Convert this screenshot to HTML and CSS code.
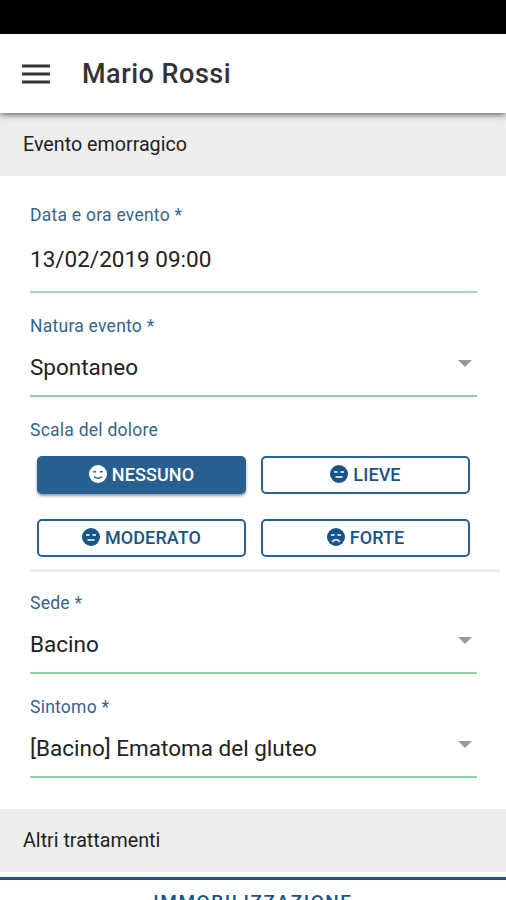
FILE: index.html
```html
<!DOCTYPE html>
<html lang="it">
<head>
    <meta charset="UTF-8">
    <meta name="viewport" content="width=device-width, initial-scale=1.0">
    <title>Mario Rossi</title>
    <link rel="stylesheet" href="styles.css">
</head>
<body>
    <div class="status-bar"></div>

    <header class="toolbar">
        <svg class="menu-icon" viewBox="0 0 28 20">
            <path d="M0 2h28M0 10h28M0 18h28" stroke="#333" stroke-width="2.8"/>
        </svg>
        <h1>Mario Rossi</h1>
    </header>

    <h2 class="section-title">Evento emorragico</h2>

    <main class="form">
        <div class="field field-date">
            <label>Data e ora evento *</label>
            <div class="value"><span>13/02/2019 09:00</span></div>
        </div>

        <div class="field">
            <label>Natura evento *</label>
            <div class="value"><span>Spontaneo</span><i class="arrow"></i></div>
        </div>

        <div class="pain">
            <label>Scala del dolore</label>
            <div class="buttons">
                <button class="active">
                    <svg class="face" viewBox="0 0 18 18">
                        <circle cx="9" cy="9" r="9" fill="currentColor"/>
                        <path class="line" d="M4.5 7.2q1.2-1.2 2.4 0M11.1 7.2q1.2-1.2 2.4 0M5 11.4q4 3.6 8 0"/>
                    </svg>
                    <span>NESSUNO</span>
                </button>
                <button>
                    <svg class="face" viewBox="0 0 18 18">
                        <circle cx="9" cy="9" r="9" fill="currentColor"/>
                        <path class="line" d="M4 7h3.6M10.4 7H14M5.5 12h7"/>
                    </svg>
                    <span>LIEVE</span>
                </button>
                <button>
                    <svg class="face" viewBox="0 0 18 18">
                        <circle cx="9" cy="9" r="9" fill="currentColor"/>
                        <path class="line" d="M4 7h3.6M10.4 7H14M5.5 12h7"/>
                    </svg>
                    <span>MODERATO</span>
                </button>
                <button>
                    <svg class="face" viewBox="0 0 18 18">
                        <circle cx="9" cy="9" r="9" fill="currentColor"/>
                        <path class="line" d="M4 7h3.6M10.4 7H14M5 13.8q4-4.2 8 0"/>
                    </svg>
                    <span>FORTE</span>
                </button>
            </div>
        </div>

        <div class="field">
            <label>Sede *</label>
            <div class="value"><span>Bacino</span><i class="arrow"></i></div>
        </div>

        <div class="field">
            <label>Sintomo *</label>
            <div class="value"><span>[Bacino] Ematoma del gluteo</span><i class="arrow"></i></div>
        </div>
    </main>

    <h2 class="section-title">Altri trattamenti</h2>

    <button class="treatment">IMMOBILIZZAZIONE</button>
</body>
</html>
```
FILE: styles.css
```css
* {
    box-sizing: border-box;
}

body {
    margin: 0;
    height: 900px;
    overflow: hidden;
    background-color: #fff;
    font-family: Roboto, sans-serif;
    color: #222;
}

.status-bar {
    height: 34px;
    background-color: #000;
}

.toolbar {
    position: relative;
    display: flex;
    align-items: center;
    height: 79px;
    padding-left: 22px;
    background-color: #fff;
    box-shadow: 0 1px 7px rgba(0, 0, 0, 0.7);
}

.menu-icon {
    width: 28px;
    height: 20px;
    margin-right: 32px;
}

h1 {
    margin: 0;
    font-size: 27px;
    font-weight: 500;
    letter-spacing: 0.5px;
    color: #333;
}

.section-title {
    height: 63px;
    margin: 0;
    padding-left: 23px;
    background-color: #eee;
    font-size: 19.7px;
    font-weight: 400;
    line-height: 64px;
}

.form {
    padding: 26px 29px 31px 30px;
}

label {
    display: block;
    height: 24px;
    font-size: 17.5px;
    line-height: 26px;
    letter-spacing: 0.25px;
    color: #36638f;
}

.field {
    height: 104px;
    padding-top: 20px;
    border-bottom: 2px solid #8fd0a3;
}

.field-date {
    height: 91px;
    padding-top: 0;
    border-bottom-color: #a5dab5;
}

.value {
    display: flex;
    align-items: center;
    justify-content: space-between;
    height: 58px;
    padding-top: 2px;
    font-size: 22.5px;
}

.field-date .value {
    height: 65px;
    padding-top: 0;
}

.arrow {
    margin: 0 5px 8px 0;
    border: 7px solid transparent;
    border-top-color: #999;
    border-bottom: 0;
}

.pain {
    height: 175px;
    margin-right: -23px;
    padding-top: 20px;
    border-bottom: 3px solid #eee;
}

.pain + .field {
    height: 102px;
    padding-top: 18px;
}

.buttons {
    display: grid;
    grid-template-columns: 209px 209px;
    gap: 25px 15px;
    padding: 15px 0 0 7px;
}

.buttons button {
    display: flex;
    align-items: center;
    justify-content: center;
    gap: 5px;
    height: 38px;
    padding: 0 0 2px;
    border: 2px solid #2c6191;
    border-radius: 5px;
    background-color: #fff;
    color: #195488;
    font-family: inherit;
    font-size: 18px;
    font-weight: 500;
    letter-spacing: 0.1px;
}

.buttons .active {
    border-color: #275f8f;
    background-color: #275f8f;
    color: #fff;
    box-shadow: 0 2px 3px rgba(0, 0, 0, 0.4);
}

.face {
    width: 18px;
    height: 18px;
}

.line {
    fill: none;
    stroke: #c5d6e5;
    stroke-width: 2;
}

.active .line {
    stroke: #275f8f;
    stroke-width: 1.4;
}

.treatment {
    display: block;
    width: 100%;
    height: 46px;
    margin-top: 5px;
    padding: 0;
    border: 0;
    border-top: 3px solid #1d578b;
    background-color: #fff;
    color: #195488;
    font-family: inherit;
    font-size: 19px;
    font-weight: 500;
    letter-spacing: 1.55px;
}
```
